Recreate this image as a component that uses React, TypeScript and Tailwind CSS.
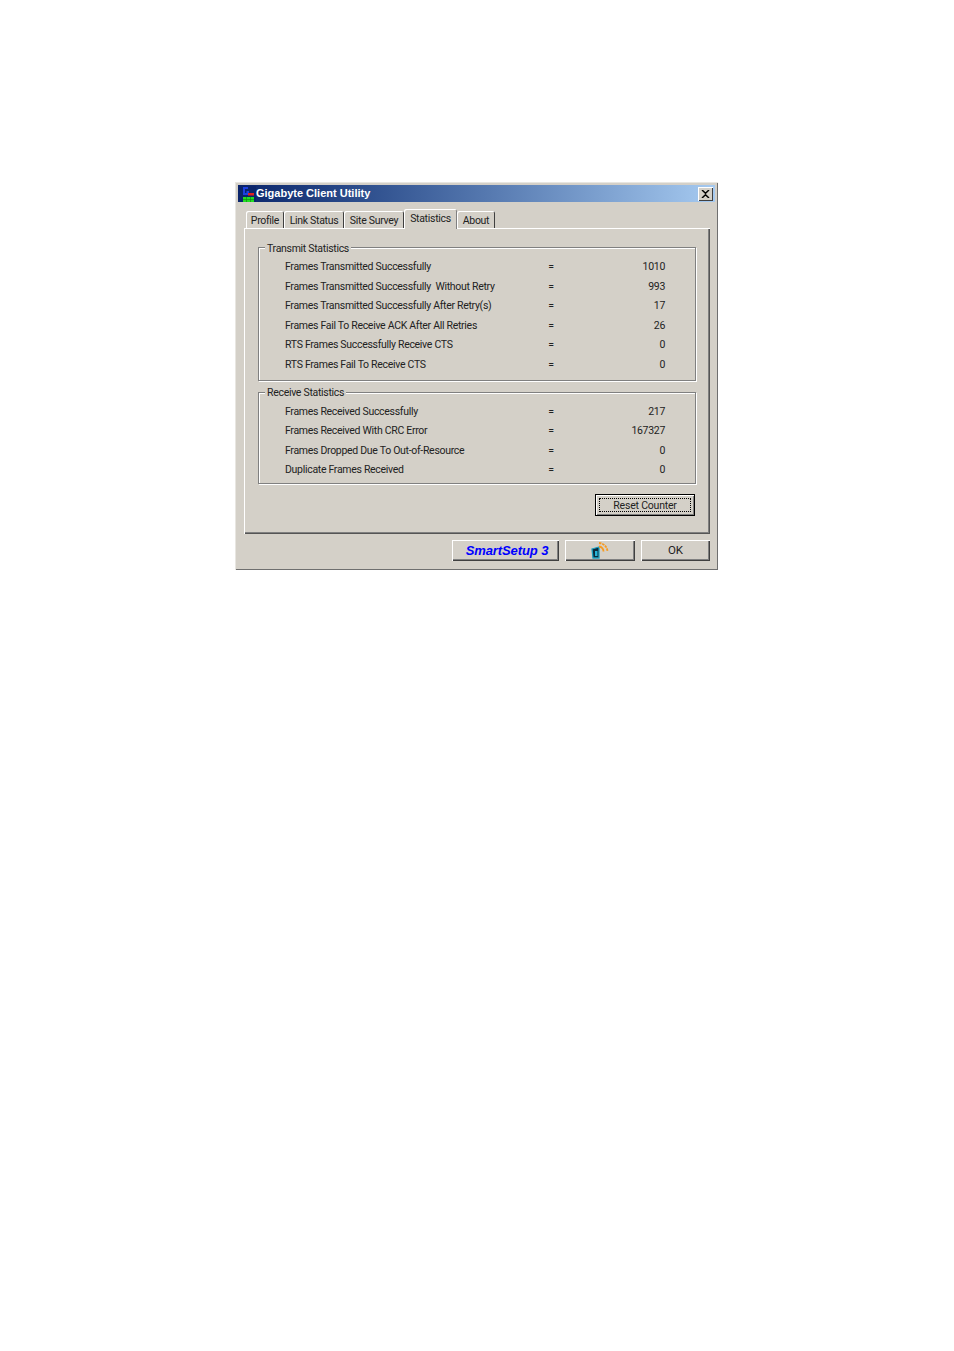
const FONT = "font-['Roboto',Arial,sans-serif]";

const TRANSMIT = [
  ["Frames Transmitted Successfully", "1010"],
  ["Frames Transmitted Successfully  Without Retry", "993"],
  ["Frames Transmitted Successfully After Retry(s)", "17"],
  ["Frames Fail To Receive ACK After All Retries", "26"],
  ["RTS Frames Successfully Receive CTS", "0"],
  ["RTS Frames Fail To Receive CTS", "0"],
];

const RECEIVE = [
  ["Frames Received Successfully", "217"],
  ["Frames Received With CRC Error", "167327"],
  ["Frames Dropped Due To Out-of-Resource", "0"],
  ["Duplicate Frames Received", "0"],
];

const TABS = ["Profile", "Link Status", "Site Survey", "Statistics", "About"];
const TAB_WIDTHS = ["w-[38px]", "w-[60px]", "w-[60px]", "w-[53px]", "w-[38px]"];

function AppLogo() {
  return (
    <svg width="16" height="16" viewBox="0 0 16 16" className="shrink-0">
      <rect width="16" height="16" fill="#0a246a" />
      <path d="M8 2H4v6h4V6H6.500" fill="none" stroke="#1c3fe0" strokeWidth="2" />
      <rect x="8" y="7" width="6" height="2.500" fill="#e02020" />
      <rect x="3" y="11" width="11" height="5" fill="#22dd22" />
      <path d="M6.500 11v5M10.500 11v5M3 13.500h11" stroke="#128a12" strokeWidth="0.7" />
    </svg>
  );
}

function SignalIcon() {
  return (
    <svg width="18" height="17" viewBox="0 0 18 17">
      <path d="M1 7l7-2v11H2z" fill="#0c2a3a" stroke="#1a9fc0" strokeWidth="1.300" />
      <rect x="4" y="9" width="2.500" height="5" fill="#27b3d6" />
      <path d="M8 4.500a5 5 0 0 1 4.500 5" fill="none" stroke="#f79a20" strokeWidth="1.800" />
      <path d="M8 1a9 9 0 0 1 8.500 8.500" fill="none" stroke="#f79a20" strokeWidth="1.800" strokeDasharray="2.500 0.800" />
    </svg>
  );
}

function StatGroup({ title, rows, className, legendTop }: { title: string; rows: string[][]; className: string; legendTop: string }) {
  return (
    <div className={`relative ml-[14px] w-[438px] border border-[#808080] shadow-[inset_1px_1px_0_#fff,1px_1px_0_#fff] ${className}`}>
      <span className={`absolute left-[6px] bg-[#d4d0c8] px-[2px] text-[10.500px] leading-[13px] tracking-[-0.3px] text-[#222] ${legendTop}`}>{title}</span>
      {rows.map(([label, value]) => (
        <div key={label} className="flex h-[19.500px] items-center whitespace-pre text-[10.500px] tracking-[-0.3px] text-[#222]">
          <span className="ml-[26px] w-[256px]">{label}</span>
          <span className="w-[20px] text-center">=</span>
          <span className="w-[104px] text-right">{value}</span>
        </div>
      ))}
    </div>
  );
}

function Button({ width, children }: { width: string; children: React.ReactNode }) {
  return (
    <div className={`flex h-[21px] items-center justify-center bg-[#d4d0c8] shadow-[inset_1px_1px_0_#fff,inset_-1px_-1px_0_#404040,inset_-2px_-2px_0_#808080] ${width}`}>
      {children}
    </div>
  );
}

export default function App() {
  return (
    <div className={`h-[1351px] w-[954px] bg-white pl-[235px] pt-[182px] ${FONT}`}>
      <div className="h-[388px] w-[483px] bg-[#d4d0c8] p-[3px] shadow-[inset_1px_1px_0_#e8e6e1,inset_-1px_-1px_0_#6f6f6f]">
        {/* Title bar */}
        <div className="flex h-[17px] items-center bg-gradient-to-r from-[#0a246a] to-[#a6caf0] pl-[2px] pr-[2px]">
          <AppLogo />
          <span className="font-['Liberation_Sans',Arial,sans-serif] text-[11px] font-bold text-white">Gigabyte Client Utility</span>
          <div className="ml-auto flex h-[14px] w-[15px] items-center justify-center bg-[#d4d0c8] shadow-[inset_1px_1px_0_#fff,inset_-1px_-1px_0_#404040]">
            <svg width="9" height="8" viewBox="0 0 9 8">
              <path d="M1 0l3.500 3.200L8 0M1 8l3.500-3.200L8 8" fill="none" stroke="#000" strokeWidth="1.500" />
            </svg>
          </div>
        </div>

        {/* Tabs */}
        <div className="ml-[8px] mt-[7px] flex h-[19px] items-end text-[10.500px] tracking-[-0.3px] text-[#222]">
          {TABS.map((tab, i) =>
            tab === "Statistics" ? (
              <div key={tab} className={`relative z-10 -mb-px flex h-[20px] items-start justify-center rounded-t-[2px] bg-[#d4d0c8] pt-[2px] shadow-[inset_1px_1px_0_#fff,inset_-1px_0_0_#808080] ${TAB_WIDTHS[i]}`}>
                {tab}
              </div>
            ) : (
              <div key={tab} className={`flex h-[17px] items-center justify-center rounded-t-[2px] pt-[3px] shadow-[inset_1px_1px_0_#fff,inset_-1px_0_0_#404040] ${TAB_WIDTHS[i]}`}>
                {tab}
              </div>
            ),
          )}
        </div>

        {/* Tab panel */}
        <div className="ml-[6px] h-[306px] w-[466px] pt-[19px] shadow-[inset_1px_1px_0_#fff,inset_-1px_-1px_0_#555,inset_-2px_-2px_0_#808080]">
          <StatGroup title="Transmit Statistics" rows={TRANSMIT} className="h-[134px] pt-[9.500px]" legendTop="top-[-6px]" />
          <StatGroup title="Receive Statistics" rows={RECEIVE} className="mt-[11px] h-[92px] pt-[9px]" legendTop="top-[-7px]" />
          <div className="ml-[351px] mt-[10px] flex h-[22px] w-[100px] items-center justify-center border border-black bg-[#d4d0c8] p-[3px] text-[10.500px] tracking-[-0.2px] text-[#222] shadow-[inset_1px_1px_0_#fff,inset_-1px_-1px_0_#808080]">
            <div className="flex h-full w-full items-center justify-center border border-dotted border-black pt-[2px]">Reset Counter</div>
          </div>
        </div>

        {/* Bottom buttons */}
        <div className="ml-[214px] mt-[6px] flex gap-[6px]">
          <Button width="w-[107px]">
            <span className="pl-[3px] font-['Liberation_Sans',Arial,sans-serif] text-[13px] font-bold italic tracking-[-0.1px] text-[#0000ff]">SmartSetup 3</span>
          </Button>
          <Button width="w-[70px]">
            <SignalIcon />
          </Button>
          <Button width="w-[69px]">
            <span className="text-[11.500px] text-[#222]">OK</span>
          </Button>
        </div>
      </div>
    </div>
  );
}
